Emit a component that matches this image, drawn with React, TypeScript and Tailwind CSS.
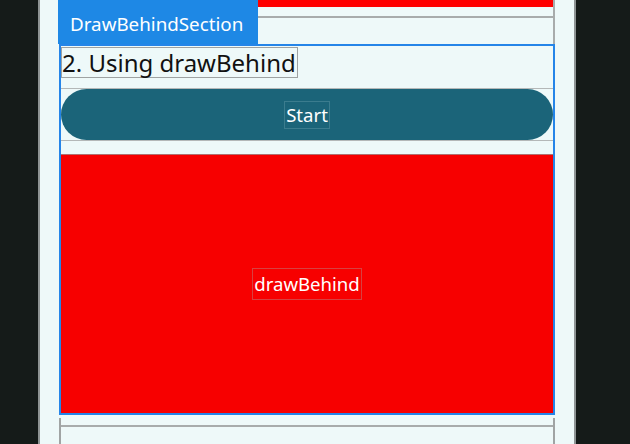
export default function App() {
  return (
    <div className="flex h-[444px] w-[630px] overflow-hidden bg-[#151b19] font-['Noto_Sans',sans-serif]">
      <div className="w-[38px] shrink-0" />

      {/* phone screen */}
      <div className="flex w-[538px] shrink-0 flex-col border-x-2 border-[#8e9494] bg-[#eef9f9] pl-[18px] pr-[19px]">
        {/* top row: tab + previous section tail */}
        <div className="flex h-[44px]">
          <div className="flex w-[200px] items-center bg-[#1e88e5] pl-[12px] pt-[5px] text-[18.8px] text-white">
            DrawBehindSection
          </div>
          <div className="flex-1 border-r-2 border-[#a8acac]">
            <div className="h-[7px] bg-[#ff0000]" />
            <div className="h-[11px] border-b-2 border-[#a8acac]" />
          </div>
        </div>

        {/* drawBehind card */}
        <div className="ml-px flex h-[371px] flex-col border-2 border-[#2585e8]">
          <div className="pt-px">
            <span className="inline-block border border-[#9ea2a2] pr-px text-[24px] leading-[29px] text-[#111]">
              2. Using drawBehind
            </span>
          </div>
          <div className="mt-[10px] border-y border-[#b4b8b8]">
            <button className="flex h-[51px] w-full items-center justify-center rounded-full bg-[#1b6479]">
              <span className="border border-[#3b7c8e] px-px text-[18.6px] leading-[26px] text-white">Start</span>
            </button>
          </div>
          <div className="mt-[13px] flex flex-1 items-center justify-center border-t border-[#b07070] bg-[#f70000]">
            <span className="border border-[#d84040] px-px text-[18.6px] leading-[30px] text-white">drawBehind</span>
          </div>
        </div>

        {/* next section */}
        <div className="ml-px mt-[3px] flex-1 border-x-2 border-[#a0a4a4]">
          <div className="h-[9px] border-b-2 border-[#a8acac]" />
        </div>
      </div>

      <div className="flex-1" />
    </div>
  )
}
